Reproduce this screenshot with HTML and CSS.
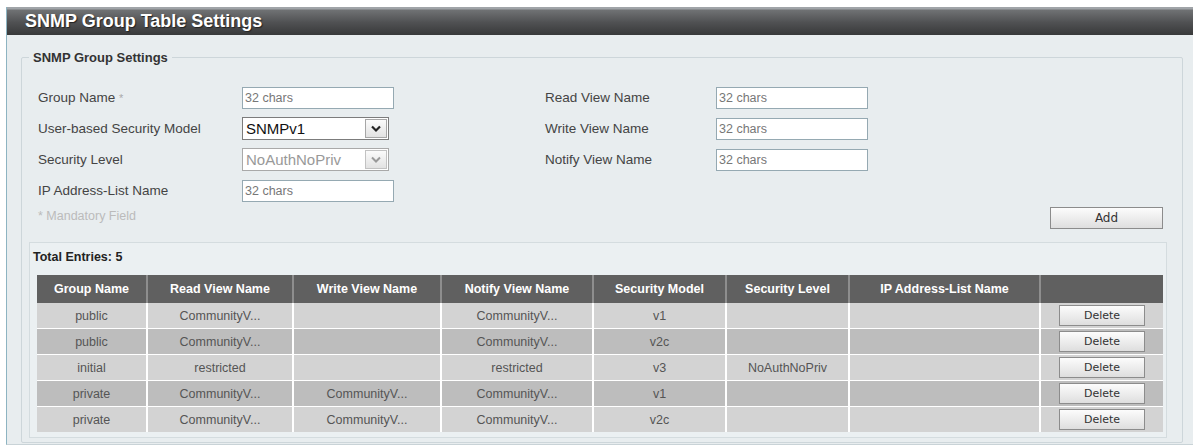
FILE: index.html
```html
<!DOCTYPE html>
<html lang="en">
<head>
  <meta charset="UTF-8" />
  <title>SNMP Group Table Settings</title>
  <link rel="stylesheet" href="styles.css">
</head>
<body>
  <div class="panel">
    <div class="panel-title">SNMP Group Table Settings</div>

    <fieldset class="group">
      <legend>SNMP Group Settings</legend>

      <div class="form">
        <div class="col col-left">
          <div class="row">
            <label>Group Name <span class="req">*</span></label>
            <input class="text" type="text" placeholder="32 chars" />
          </div>
          <div class="row">
            <label>User-based Security Model</label>
            <div class="select">
              <span class="val">SNMPv1</span>
              <span class="arrow"><svg width="12" height="8" viewBox="0 0 12 8"><path d="M2 1.5 L6 5.5 L10 1.5" fill="none" stroke="#222" stroke-width="2.2"/></svg></span>
            </div>
          </div>
          <div class="row">
            <label>Security Level</label>
            <div class="select disabled">
              <span class="val">NoAuthNoPriv</span>
              <span class="arrow"><svg width="12" height="8" viewBox="0 0 12 8"><path d="M2 1.5 L6 5.5 L10 1.5" fill="none" stroke="#999" stroke-width="2"/></svg></span>
            </div>
          </div>
          <div class="row">
            <label>IP Address-List Name</label>
            <input class="text" type="text" placeholder="32 chars" />
          </div>
        </div>

        <div class="col col-right">
          <div class="row">
            <label>Read View Name</label>
            <input class="text" type="text" placeholder="32 chars" />
          </div>
          <div class="row">
            <label>Write View Name</label>
            <input class="text" type="text" placeholder="32 chars" />
          </div>
          <div class="row">
            <label>Notify View Name</label>
            <input class="text" type="text" placeholder="32 chars" />
          </div>
        </div>
      </div>

      <div class="actions">
        <span class="mandatory">* Mandatory Field</span>
        <button class="btn btn-add">Add</button>
      </div>

      <div class="entries">
        <div class="total">Total Entries: 5</div>
        <table class="grid">
          <colgroup>
            <col style="width:110px"><col style="width:146px"><col style="width:148px"><col style="width:152px">
            <col style="width:133px"><col style="width:123px"><col style="width:191px"><col style="width:123px">
          </colgroup>
          <thead>
            <tr>
              <th>Group Name</th>
              <th>Read View Name</th>
              <th>Write View Name</th>
              <th>Notify View Name</th>
              <th>Security Model</th>
              <th>Security Level</th>
              <th>IP Address-List Name</th>
              <th></th>
            </tr>
          </thead>
          <tbody>
            <tr>
              <td>public</td><td>CommunityV...</td><td></td><td>CommunityV...</td>
              <td>v1</td><td></td><td></td><td><button class="btn btn-del">Delete</button></td>
            </tr>
            <tr>
              <td>public</td><td>CommunityV...</td><td></td><td>CommunityV...</td>
              <td>v2c</td><td></td><td></td><td><button class="btn btn-del">Delete</button></td>
            </tr>
            <tr>
              <td>initial</td><td>restricted</td><td></td><td>restricted</td>
              <td>v3</td><td>NoAuthNoPriv</td><td></td><td><button class="btn btn-del">Delete</button></td>
            </tr>
            <tr>
              <td>private</td><td>CommunityV...</td><td>CommunityV...</td><td>CommunityV...</td>
              <td>v1</td><td></td><td></td><td><button class="btn btn-del">Delete</button></td>
            </tr>
            <tr>
              <td>private</td><td>CommunityV...</td><td>CommunityV...</td><td>CommunityV...</td>
              <td>v2c</td><td></td><td></td><td><button class="btn btn-del">Delete</button></td>
            </tr>
          </tbody>
        </table>
      </div>
    </fieldset>
  </div>
</body>
</html>
```

FILE: styles.css
```css
body {
  margin: 0;
  background: #fff;
  font-family: "Liberation Sans", Arial, sans-serif;
  color: #444;
}
.panel {
  margin: 7px 2px 0 6px;
  height: 437px;
  border-left: 1px solid #8db4c2;
  border-bottom: 1px solid #c9d3d7;
  background: #e8edef;
  overflow: hidden;
}
.panel-title {
  height: 28px;
  line-height: 28px;
  padding-left: 18px;
  background: linear-gradient(#a0a4a8 0, #a0a4a8 2px, #707274 3px, #505153 55%, #38393a 100%);
  color: #fff;
  font-size: 18px;
  font-weight: bold;
  text-shadow: 1px 1px 1px #222;
}
.group {
  margin: 15px 10px 0 14px;
  padding: 17px 15px 4px 7px;
  border: 1px solid #cdd6da;
  border-radius: 2px;
}
.group legend {
  margin-left: 0;
  padding: 0 4px;
  font-size: 13px;
  font-weight: bold;
  color: #333;
}
.form {
  display: flex;
  padding-left: 9px;
}
.col-left {
  width: 507px;
}
.row {
  display: flex;
  align-items: center;
  height: 31px;
}
.row label {
  font-size: 13.5px;
  color: #444;
}
.col-left label {
  width: 204px;
}
.col-right label {
  width: 171px;
}
.req {
  color: #aaa;
  font-size: 11px;
}
.text {
  box-sizing: border-box;
  width: 152px;
  height: 22px;
  margin: 0;
  padding: 0 2px;
  border: 1px solid #95a9b2;
  background: #fff;
  font-family: "Liberation Sans", Arial, sans-serif;
  font-size: 12.5px;
}
.text::placeholder {
  color: #777;
}
.select {
  box-sizing: border-box;
  display: flex;
  align-items: center;
  justify-content: space-between;
  width: 147px;
  height: 23px;
  border: 1px solid #7c7c7c;
  background: #fff;
  font-size: 15px;
  color: #111;
}
.select .val {
  padding-left: 3px;
}
.select .arrow {
  display: flex;
  align-items: center;
  justify-content: center;
  width: 20px;
  height: 17px;
  margin-right: 1px;
  border: 1px solid #a6a6a6;
  background: linear-gradient(#fbfbfb, #e2e2e2);
}
.select.disabled {
  border-color: #a9a9a9;
  color: #999;
}
.select.disabled .arrow {
  border-color: #c2c2c2;
}
.actions {
  display: flex;
  justify-content: space-between;
  margin-top: 1px;
  padding-left: 9px;
}
.mandatory {
  font-size: 12.5px;
  line-height: 18px;
  color: #bbb;
}
.btn {
  margin: 0;
  padding: 0;
  border: 1px solid #8c8c8c;
  background: linear-gradient(#fcfcfc, #dedede);
  font-family: "DejaVu Sans", Verdana, sans-serif;
  color: #333;
}
.btn-add {
  width: 113px;
  height: 22px;
  margin-right: 4px;
  font-size: 12px;
}
.entries {
  margin-top: 13px;
  padding: 6px 3px 5px 7px;
  border: 1px solid #d4dcdf;
  background: #ebf0f2;
}
.total {
  margin-left: -4px;
  font-size: 12.5px;
  line-height: 16px;
  font-weight: bold;
  color: #222;
}
.grid {
  margin-top: 10px;
  border-collapse: collapse;
  table-layout: fixed;
  width: 1126px;
}
.grid th {
  height: 28px;
  padding: 0;
  background: #606060;
  border-left: 2px solid #8e8e8e;
  color: #fff;
  font-size: 12.5px;
  font-weight: bold;
}
.grid th:first-child {
  border-left: none;
}
.grid td {
  height: 25px;
  padding: 0;
  border: 2px solid #fff;
  border-bottom-width: 1px;
  border-top-width: 1px;
  text-align: center;
  font-size: 12.5px;
  color: #555;
  background: #d3d3d3;
}
.grid td:first-child {
  border-left: none;
}
.grid td:last-child {
  border-right: none;
}
.grid tbody tr:nth-child(even) td {
  background: #bdbdbd;
}
.grid tbody tr:first-child td {
  border-top: none;
}
.grid tbody tr:last-child td {
  border-bottom: none;
}
.btn-del {
  width: 86px;
  height: 21px;
  font-size: 11px;
}
```
